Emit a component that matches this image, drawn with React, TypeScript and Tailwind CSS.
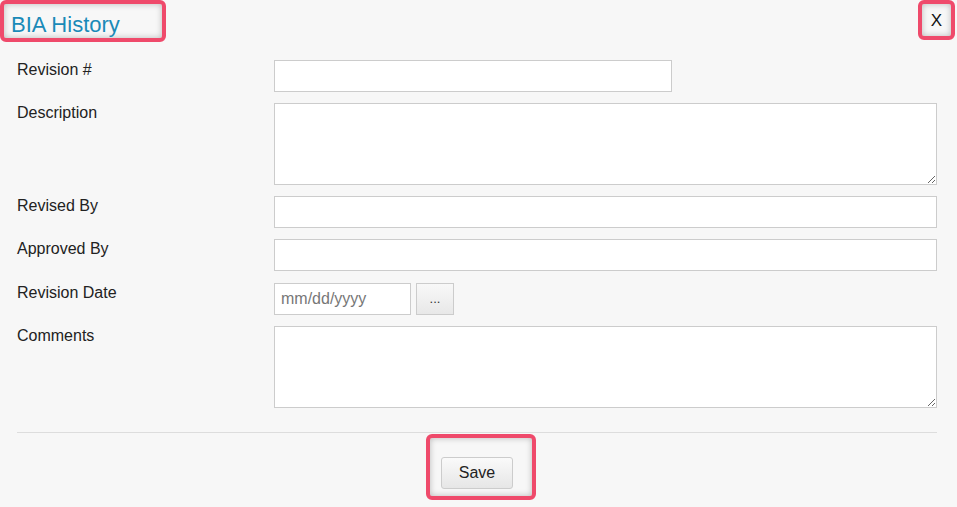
export default function App() {
  const inputCls =
    "h-[32px] border border-[#cccccc] bg-white px-[6px] text-[16px] text-[#333] outline-none placeholder:text-[#777]";
  const areaCls =
    "h-[82px] w-full border border-[#cccccc] bg-white px-[6px] py-[4px] text-[16px] text-[#333] outline-none";
  const labelCls = "text-[16px] leading-[18px] text-[#222] pt-[1px]";

  return (
    <div className="h-[507px] w-[957px] overflow-hidden bg-[#f7f7f7] font-['Liberation_Sans',Arial,sans-serif]">
      {/* Header */}
      <div className="flex h-[42px] items-start justify-between">
        <div className="flex h-[42px] w-[166px] items-center rounded-[6px] border-4 border-[#ef4a6b] pl-[7px] shadow-[inset_0_0_6px_rgba(0,0,0,0.25)]">
          <h1 className="pt-[7px] text-[22px] leading-none text-[#1a8ab8]">BIA History</h1>
        </div>
        <button className="mr-[2px] flex h-[40px] w-[37px] items-center justify-center rounded-[6px] border-4 border-[#ef4a6b] text-[17px] font-light leading-none text-[#111] shadow-[inset_0_0_6px_rgba(0,0,0,0.25)]">
          X
        </button>
      </div>

      {/* Form */}
      <div className="grid grid-cols-[257px_1fr] gap-y-[11px] pl-[17px] pr-[20px] pt-[18px]">
        <label className={labelCls}>Revision #</label>
        <div>
          <input className={`${inputCls} w-[398px]`} />
        </div>

        <label className={labelCls}>Description</label>
        <textarea className={areaCls} />

        <label className={labelCls}>Revised By</label>
        <input className={`${inputCls} w-full`} />

        <label className={labelCls}>Approved By</label>
        <input className={`${inputCls} w-full`} />

        <label className={`${labelCls} mt-[1px]`}>Revision Date</label>
        <div className="mt-[1px] flex gap-[5px]">
          <input className={`${inputCls} w-[137px]`} placeholder="mm/dd/yyyy" />
          <button className="h-[32px] w-[38px] border border-[#cccccc] bg-gradient-to-b from-[#f8f8f8] to-[#e8e8e8] text-[13px] text-[#333]">
            ...
          </button>
        </div>

        <label className={labelCls}>Comments</label>
        <textarea className={areaCls} />
      </div>

      <div className="mx-[17px] mr-[20px] mt-[24px] border-t border-[#dddddd]" />

      {/* Footer */}
      <div className="mt-[1px] flex justify-center">
        <div className="ml-[5px] rounded-[6px] border-4 border-[#ef4a6b] pb-[7px] pl-[11px] pr-[19px] pt-[19px] shadow-[inset_0_0_6px_rgba(0,0,0,0.25)]">
          <button className="h-[32px] w-[72px] rounded-[3px] border border-[#cccccc] bg-gradient-to-b from-[#fafafa] to-[#e6e6e6] text-[16px] text-[#222]">
            Save
          </button>
        </div>
      </div>
    </div>
  );
}
